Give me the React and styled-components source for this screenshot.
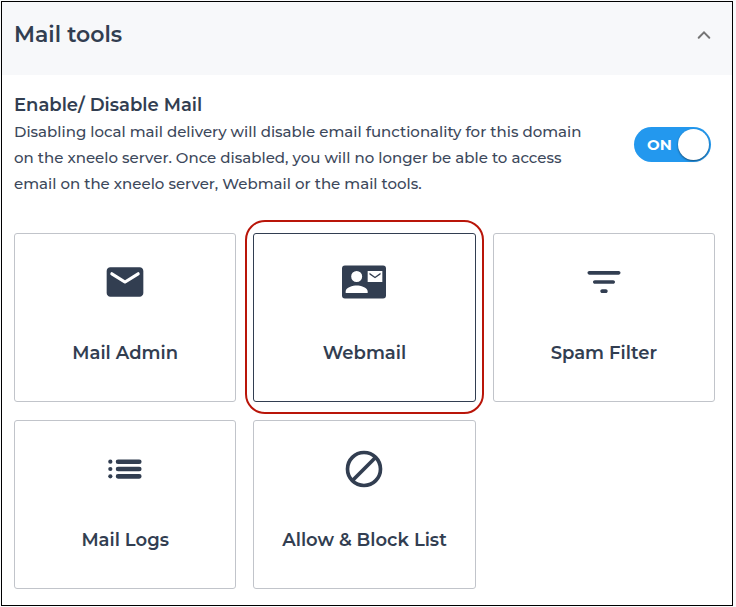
import React, { useState } from "react";
import styled, { createGlobalStyle } from "styled-components";

const GlobalStyle = createGlobalStyle`
* {
    box-sizing: border-box;
    margin: 0;
    padding: 0;
}

body {
    background: #f9fafb;
    color: #323e51;
    font-family: Montserrat, Inter, "Open Sans", sans-serif;
}
`;

const Page = styled.main`
padding: 1px 3px 1px 1px;
`;

const Panel = styled.section`
border: 1px solid #000000;
background: #ffffff;
`;

const Header = styled.header`
display: flex;
justify-content: space-between;
align-items: flex-start;
padding: 18px 16px 25px 12px;
background: #f7f8fa;
`;

const Title = styled.h1`
font-size: 22px;
font-weight: 600;
line-height: 30px;
`;

const CollapseButton = styled.button`
display: flex;
margin-top: 3px;
border: none;
background: none;
color: #757575;
cursor: pointer;
`;

const Content = styled.div`
padding: 17px 17px 16px 12px;
`;

const Setting = styled.div`
display: flex;
justify-content: space-between;
align-items: center;
gap: 32px;
padding-right: 4px;
`;

const SettingText = styled.div`
max-width: 576px;
`;

const SettingTitle = styled.h2`
margin-bottom: 1px;
font-size: 18px;
font-weight: 600;
line-height: 26px;
`;

const Description = styled.p`
color: #3c485b;
font-size: 15px;
font-weight: 500;
line-height: 26px;
`;

const Switch = styled.label`
display: flex;
flex: none;
align-items: center;
justify-content: space-between;
flex-direction: ${(props) => (props.$on ? "row" : "row-reverse")};
width: 77px;
height: 35px;
padding: 0 2px 0 13px;
border-radius: 18px;
background: ${(props) => (props.$on ? "#2398ee" : "#9aa3af")};
color: #ffffff;
font-size: 15px;
font-weight: 700;
cursor: pointer;
`;

const SwitchInput = styled.input`
position: absolute;
opacity: 0;
`;

const Knob = styled.span`
width: 31px;
height: 31px;
border-radius: 50%;
background: #ffffff;
box-shadow: 0 1px 2px rgba(0, 0, 0, 0.5);
`;

const Tools = styled.nav`
display: grid;
grid-template-columns: repeat(3, 1fr);
gap: 18px 17px;
margin-top: 36px;
`;

const ToolCard = styled.a`
position: relative;
display: flex;
flex-direction: column;
align-items: center;
gap: 36px;
padding: 26px 8px 35px;
border: 1px solid ${(props) => (props.$active ? "#323e51" : "#c1c4ca")};
border-radius: 3px;
color: inherit;
text-decoration: none;
`;

const ToolName = styled.span`
font-size: 18px;
font-weight: 600;
line-height: 26px;
`;

const Highlight = styled.span`
position: absolute;
inset: -14px -9px -13px;
border: 2px solid #b91509;
border-radius: 20px;
pointer-events: none;
`;

const ToolIcon = styled.svg`
width: 44px;
height: 44px;
fill: currentColor;
`;

const tools = [
    {
        name: "Mail Admin",
        icon: <path d="M20 4H4c-1.1 0-2 .9-2 2v12c0 1.1.9 2 2 2h16c1.1 0 2-.9 2-2V6c0-1.1-.9-2-2-2zm-.4 4.25l-7.07 4.42c-.32.2-.74.2-1.06 0L4.4 8.25a.85.85 0 1 1 .9-1.44L12 11l6.7-4.19a.85.85 0 1 1 .9 1.44z" />,
    },
    {
        name: "Webmail",
        active: true,
        icon: <path fillRule="evenodd" d="M1.6 3h20.8A1.6 1.6 0 0 1 24 4.6v14.8a1.6 1.6 0 0 1-1.6 1.6H1.6A1.6 1.6 0 0 1 0 19.4V4.6A1.6 1.6 0 0 1 1.6 3zM8 6a3 3 0 1 0 0 6 3 3 0 0 0 0-6zM2 18h12v-1c0-2-4-3.1-6-3.1S2 15 2 17zM14 6v6h8V6zm7 1.9l-3 2.1-3-2.1V7l3 2.1L21 7z" />,
    },
    {
        name: "Spam Filter",
        icon: <path d="M11 18h2c.55 0 1-.45 1-1s-.45-1-1-1h-2c-.55 0-1 .45-1 1s.45 1 1 1zM3 7c0 .55.45 1 1 1h16c.55 0 1-.45 1-1s-.45-1-1-1H4c-.55 0-1 .45-1 1zm4 6h10c.55 0 1-.45 1-1s-.45-1-1-1H7c-.55 0-1 .45-1 1s.45 1 1 1z" />,
    },
    {
        name: "Mail Logs",
        icon: (
            <>
                <circle cx="4" cy="8" r="1.15" />
                <circle cx="4" cy="12" r="1.15" />
                <circle cx="4" cy="16" r="1.15" />
                <path d="M8.2 8h11.6M8.2 12h11.6M8.2 16h11.6" stroke="currentColor" strokeWidth="2.5" strokeLinecap="round" />
            </>
        ),
    },
    {
        name: "Allow & Block List",
        icon: (
            <g fill="none" stroke="currentColor" strokeWidth="2">
                <circle cx="12" cy="12" r="9" />
                <path d="M5.6 18.4L18.4 5.6" />
            </g>
        ),
    },
];

function App() {
    const [open, setOpen] = useState(true);
    const [enabled, setEnabled] = useState(true);

    return (
        <Page>
            <GlobalStyle />
            <Panel>
                <Header>
                    <Title>Mail tools</Title>
                    <CollapseButton
                        aria-label="Toggle mail tools"
                        aria-expanded={open}
                        onClick={() => setOpen(!open)}
                    >
                        <svg width="24" height="24" viewBox="0 0 24 24" fill="none" stroke="currentColor" strokeWidth="2" strokeLinecap="round">
                            <path d={open ? "M6.7 14.7L12 9.4l5.3 5.3" : "M6.7 9.4L12 14.7l5.3-5.3"} />
                        </svg>
                    </CollapseButton>
                </Header>
                {open && (
                    <Content>
                        <Setting>
                            <SettingText>
                                <SettingTitle>Enable/ Disable Mail</SettingTitle>
                                <Description>
                                    Disabling local mail delivery will disable email functionality for this domain
                                    on the xneelo server. Once disabled, you will no longer be able to access
                                    email on the xneelo server, Webmail or the mail tools.
                                </Description>
                            </SettingText>
                            <Switch $on={enabled}>
                                <SwitchInput
                                    type="checkbox"
                                    checked={enabled}
                                    onChange={(e) => setEnabled(e.target.checked)}
                                />
                                {enabled ? "ON" : "OFF"}
                                <Knob />
                            </Switch>
                        </Setting>
                        <Tools>
                            {tools.map((tool) => (
                                <ToolCard key={tool.name} href="#" $active={tool.active}>
                                    <ToolIcon viewBox="0 0 24 24" aria-hidden="true">{tool.icon}</ToolIcon>
                                    <ToolName>{tool.name}</ToolName>
                                    {tool.active && <Highlight />}
                                </ToolCard>
                            ))}
                        </Tools>
                    </Content>
                )}
            </Panel>
        </Page>
    );
}

export default App;
